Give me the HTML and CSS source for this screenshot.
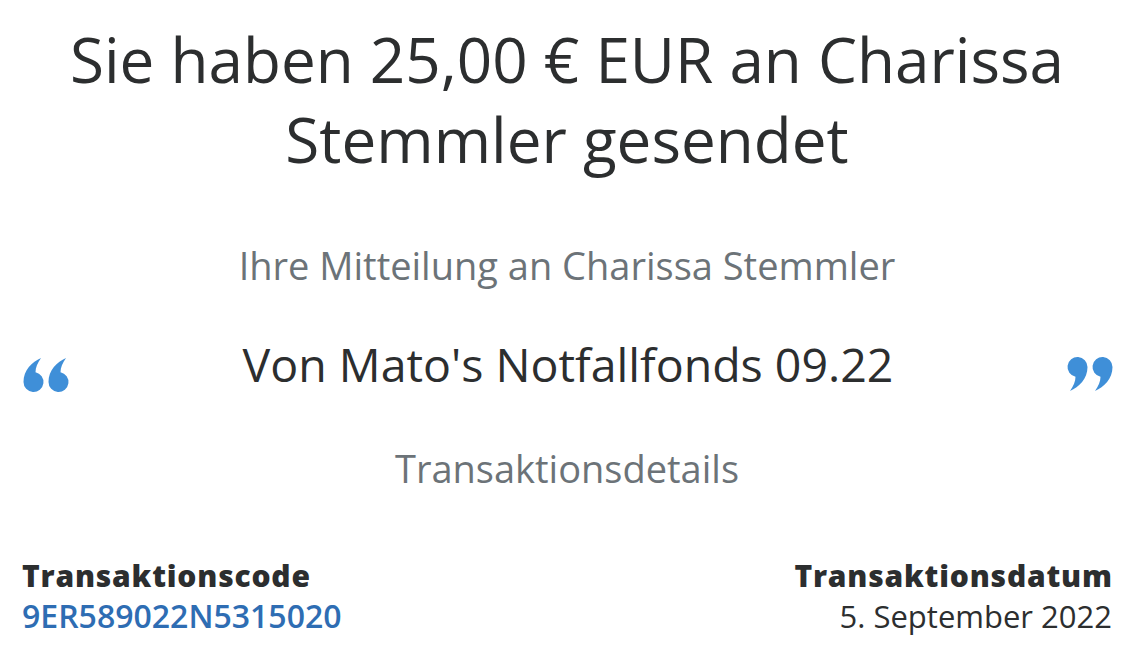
FILE: index.html
```html
<!DOCTYPE html>
<html lang="de">
<head>
<meta charset="utf-8">
<link rel="stylesheet" href="styles.css">
</head>
<body>
<main class="page">
  <h1 class="title">Sie haben 25,00 € EUR an Charissa Stemmler gesendet</h1>
  <p class="sub">Ihre Mitteilung an Charissa Stemmler</p>
  <div class="quote">
    <svg class="qmark" viewBox="0 0 49 37" width="49" height="37" aria-hidden="true">
      <path fill="#3f8fd8" d="M19 2C10 6 1.5 14 1.5 26a10 10 0 1 0 12-9.8C13.5 11.5 15.5 7 19 2Z"/>
      <path fill="#3f8fd8" d="M44 2C35 6 26.5 14 26.5 26a10 10 0 1 0 12-9.8C38.5 11.5 40.5 7 44 2Z"/>
    </svg>
    <p class="msg">Von Mato's Notfallfonds 09.22</p>
    <svg class="qmark" viewBox="0 0 49 37" width="49" height="37" aria-hidden="true">
      <path fill="#3f8fd8" d="M5 35C14 31 22.5 23 22.5 11a10 10 0 1 0-12 9.8C10.5 25.5 8.5 30 5 35Z"/>
      <path fill="#3f8fd8" d="M30 35C39 31 47.5 23 47.5 11a10 10 0 1 0-12 9.8C35.5 25.5 33.5 30 30 35Z"/>
    </svg>
  </div>
  <p class="sub details">Transaktionsdetails</p>
  <div class="meta">
    <div class="col">
      <div class="label">Transaktionscode</div>
      <div class="code">9ER589022N5315020</div>
    </div>
    <div class="col right">
      <div class="label">Transaktionsdatum</div>
      <div class="value">5. September 2022</div>
    </div>
  </div>
</main>
</body>
</html>
```

FILE: styles.css
```css
html, body {
  margin: 0;
  padding: 0;
  background: #ffffff;
}
body {
  font-family: "Open Sans", "Noto Sans", sans-serif;
  color: #2c2e2f;
}
.page {
  width: 1144px;
  box-sizing: border-box;
  padding: 19px 32px 0 22px;
}
.title {
  margin: 0 30px;
  font-weight: 400;
  font-size: 62px;
  line-height: 80px;
  text-align: center;
}
.sub {
  margin: 66px 0 0;
  text-align: center;
  font-size: 38px;
  line-height: 40px;
  color: #6c7378;
}
.quote {
  display: flex;
  align-items: flex-start;
  justify-content: space-between;
  margin-top: 54px;
}
.qmark {
  flex: none;
  margin-top: 17px;
}
.qmark:last-child {
  margin-right: -2px;
}
.msg {
  margin: 0;
  font-size: 46.5px;
  line-height: 50px;
  text-align: center;
}
.details {
  margin-top: 55px;
}
.meta {
  display: flex;
  justify-content: space-between;
  margin-top: 68px;
}
.label {
  font-weight: 800;
  font-size: 30px;
  line-height: 40px;
  letter-spacing: 0.8px;
}
.right .label {
  margin-right: -0.8px;
}
.code {
  font-weight: 600;
  font-size: 32px;
  line-height: 40px;
  color: #2e6db3;
}
.value {
  font-size: 31px;
  line-height: 40px;
}
.right {
  text-align: right;
}
```
